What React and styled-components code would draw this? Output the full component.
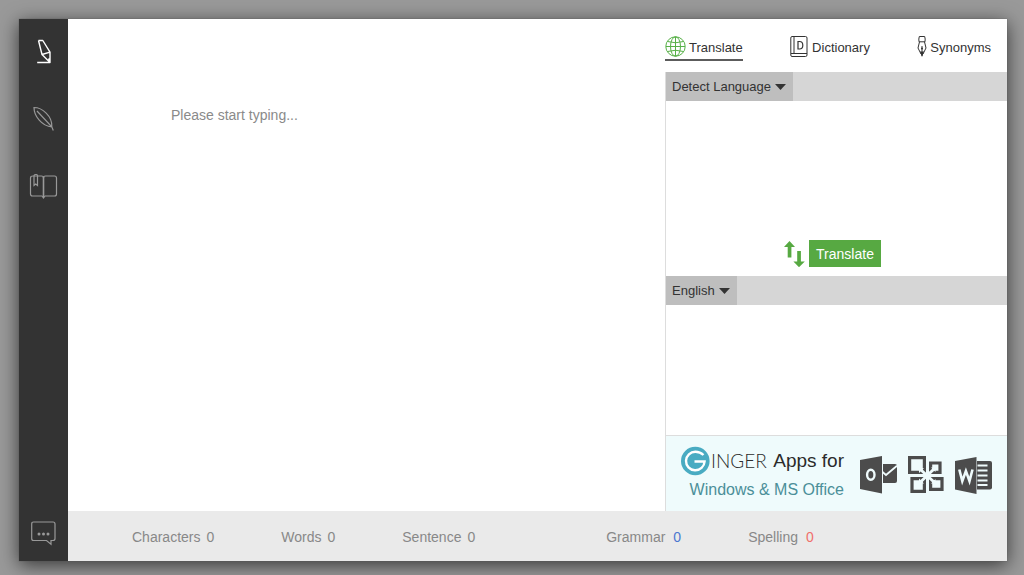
import styled, { createGlobalStyle } from 'styled-components';

const GlobalStyle = createGlobalStyle`
  * {
    box-sizing: border-box;
  }

  body {
    margin: 0;
    background: #999;
    font-family: 'Liberation Sans', Arial, Helvetica, sans-serif;
    color: #333;
  }

  button,
  select,
  textarea {
    margin: 0;
    border: 0;
    background: none;
    font: inherit;
    color: inherit;
  }
`;

const Backdrop = styled.div`
  display: flex;
  min-height: 100vh;
  padding: 19px 17px 14px 19px;
`;

const Window = styled.div`
  flex: 1;
  display: flex;
  background: #fff;
  box-shadow: 0 0 1px #555, 0 4px 18px rgba(0, 0, 0, 0.65);
`;

const Sidebar = styled.nav`
  width: 49px;
  display: flex;
  flex-direction: column;
  align-items: center;
  gap: 40px;
  padding: 18px 0 14px;
  background: #333;
`;

const SideButton = styled.button`
  display: flex;
  padding: 0;
  color: ${(props) => (props.$active ? '#fff' : '#999')};
  ${(props) => props.$last && 'margin-top: auto;'}
  cursor: pointer;
`;

const Main = styled.div`
  flex: 1;
  min-width: 0;
  display: flex;
  flex-direction: column;
`;

const Workspace = styled.div`
  flex: 1;
  display: flex;
`;

const Editor = styled.textarea`
  flex: 1;
  min-width: 0;
  padding: 86px 60px 40px 103px;
  font-size: 14px;
  line-height: 20px;
  resize: none;
  outline: none;

  &::placeholder {
    color: #8a8a8a;
    opacity: 1;
  }
`;

const Panel = styled.section`
  width: 342px;
  display: flex;
  flex-direction: column;
`;

const Tabs = styled.div`
  display: flex;
  justify-content: space-between;
  padding: 17px 16px 11px 0;
`;

const Tab = styled.button`
  display: flex;
  align-items: flex-start;
  gap: ${(props) => props.$gap}px;
  padding: 0;
  border-bottom: 2px solid ${(props) => (props.$active ? '#5c5c5c' : 'transparent')};
  font-size: 13px;
  line-height: 23px;
  cursor: pointer;
`;

const Pane = styled.div`
  flex: ${(props) => props.$grow} 1 0;
  display: flex;
  flex-direction: column;
  border-left: 1px solid #ddd;
`;

const LanguageBar = styled.div`
  display: flex;
  height: 29px;
  background: #d6d6d6;
`;

const Picker = styled.label`
  display: flex;
  align-items: center;
  position: relative;
  background: #bebebe;
`;

const Select = styled.select`
  appearance: none;
  field-sizing: content;
  height: 100%;
  padding: 0 22px 0 6px;
  font-size: 13px;
  outline: none;
`;

const Caret = styled.svg`
  position: absolute;
  right: 7px;
  pointer-events: none;
`;

const TextArea = styled.textarea`
  flex: 1;
  min-height: 40px;
  padding: 8px;
  font-size: 14px;
  resize: none;
  outline: none;
`;

const Actions = styled.div`
  display: flex;
  justify-content: center;
  gap: 4px;
  padding: 0 8px 9px 0;
`;

const SwapButton = styled.button`
  display: flex;
  padding: 0;
  cursor: pointer;
`;

const TranslateButton = styled.button`
  height: 27px;
  padding: 0 7px;
  background: #57a942;
  color: #fff;
  font-size: 14px;
  cursor: pointer;
`;

const Banner = styled.a`
  display: flex;
  align-items: center;
  gap: 15px;
  height: 76px;
  padding: 3px 14px 0 15px;
  border: 1px solid #ddd;
  border-width: 1px 0 0 1px;
  background: #effbfc;
  color: #2b2b2b;
  text-decoration: none;
`;

const BannerText = styled.div`
  flex: 1;
  display: flex;
  flex-direction: column;
`;

const BrandLine = styled.div`
  display: flex;
  align-items: center;
  justify-content: space-between;
  font-size: 19px;
  line-height: 30px;
  white-space: nowrap;
`;

const Brand = styled.span`
  display: flex;
  align-items: center;
  gap: 1px;
  font-family: Lato, sans-serif;
  font-weight: 300;
`;

const Platforms = styled.div`
  color: #4b8f99;
  font-size: 16px;
  line-height: 28px;
  text-align: right;
  white-space: nowrap;
`;

const AppIcons = styled.div`
  display: flex;
  gap: 10px;
`;

const StatusBar = styled.footer`
  display: flex;
  align-items: center;
  gap: 131px;
  height: 50px;
  padding: 1px 0 0 64px;
  background: #eaeaea;
  color: #888;
  font-size: 14px;
`;

const StatGroup = styled.div`
  display: flex;
  gap: 67px;
`;

const Stat = styled.div`
  display: flex;
  gap: ${(props) => props.$gap}px;
`;

const Count = styled.span`
  color: ${(props) => props.$color || 'inherit'};
`;

const PenIcon = () => (
  <svg width="29" height="28" fill="none" stroke="currentColor" strokeWidth="1.4" strokeLinejoin="round">
    <path d="M9.5 3.5H13.8L21 15.2V25.5H8.2M9.5 3.5L13 17.5L21 15.2M13 17.5L21 25.5M19.6 21.5L21 25.5" />
  </svg>
);

const LeafIcon = () => (
  <svg width="29" height="28" fill="none" stroke="currentColor" strokeWidth="1.2">
    <path d="M5 2.5C13 2.5 23.5 11 22.8 21.8C13 21.5 5 11 5 2.5ZM8 6L22.8 21.8L24.3 25.5" />
  </svg>
);

const BookIcon = () => (
  <svg width="29" height="28" fill="none" stroke="currentColor" strokeWidth="1.2">
    <path d="M4 3H12.5Q14.5 3 14.5 5Q14.5 3 16.5 3H25.5Q27.5 3 27.5 5V21Q27.5 23 25.5 23H16L14.5 25L13 23H3.5Q1.5 23 1.5 21V5Q1.5 3 4 3Z" />
    <path d="M14.5 4V24" strokeWidth="1.6" />
    <path d="M5 12.5V3Q5 1.5 6.5 1.5H7.5Q8.5 1.5 8.5 3V12.5L6.7 11Z" />
  </svg>
);

const ChatIcon = () => (
  <svg width="29" height="28" fill="none" stroke="currentColor" strokeWidth="1.2">
    <path d="M4.5 3H24Q26 3 26 5V19.5Q26 21.5 24 21.5H22V25.3L17.5 21.5H4.5Q2.7 21.5 2.7 19.5V5Q2.7 3 4.5 3Z" />
    <g fill="currentColor" stroke="none">
      <circle cx="10" cy="15" r="1.5" />
      <circle cx="14.5" cy="15" r="1.5" />
      <circle cx="19" cy="15" r="1.5" />
    </g>
  </svg>
);

const GlobeIcon = () => (
  <svg width="21" height="21" fill="none" stroke="#57b047">
    <circle cx="10.5" cy="10.5" r="9.7" />
    <ellipse cx="10.5" cy="10.5" rx="5" ry="9.7" />
    <path d="M10.5 1V20M1 10.5H20M2.5 5.5Q10.5 8 18.5 5.5M2.5 15.5Q10.5 13 18.5 15.5" />
  </svg>
);

const DictionaryIcon = () => (
  <svg width="18" height="21" fill="none" stroke="#333">
    <path d="M2 .5H15.5Q17 .5 17 2V19Q17 20.5 15.5 20.5H2Q.8 20.5 .8 19V2Q.8 .5 2 .5ZM1 17.5H17M4 .5V17.5" />
    <path d="M8 5.5V13H9.5Q12.8 13 12.8 9.2Q12.8 5.5 9.5 5.5Z" strokeWidth="1.2" />
  </svg>
);

const NibIcon = () => (
  <svg width="10" height="21" fill="none" stroke="#333">
    <path d="M2.3 .5H7.7Q8.5 3 8 5.8H2Q1.5 3 2.3 .5ZM2.5 5.8L1 12L4 18H6L9 12L7.5 5.8M5 10V20" />
    <circle cx="5" cy="12.5" r="1" fill="#333" stroke="none" />
    <path d="M3 15.5L5 21L7 15.5Z" fill="#333" stroke="none" />
  </svg>
);

const SwapIcon = () => (
  <svg width="21" height="27" fill="#57a942">
    <path d="M5.5 1L11 7H7.4V17.5H3.7V7H0Z" />
    <path d="M13.2 11H16.9V21.5H20.8L15 27.2L9.4 21.5H13.2Z" />
  </svg>
);

const GingerLogo = () => (
  <svg width="29" height="30">
    <circle cx="14.3" cy="15" r="14.3" fill="#49abc2" />
    <path
      d="M22.5 9Q19 5.7 14.5 5.7A9.3 9.3 0 1 0 23.6 15.5H13.5"
      fill="none"
      stroke="#fff"
      strokeWidth="2.4"
    />
  </svg>
);

const OutlookIcon = () => (
  <svg width="38" height="39">
    <path d="M1 4L23 0V37.5L1 33Z" fill="#4c4c4c" />
    <path d="M24 8H36Q38 8 38 10V25Q38 27 36 27H24Z" fill="#4c4c4c" />
    <path d="M23.5 16L27 19L38 9.8" fill="none" stroke="#effbfc" strokeWidth="1.8" />
    <ellipse cx="11.8" cy="18.8" rx="3.7" ry="5" fill="none" stroke="#effbfc" strokeWidth="2.4" />
  </svg>
);

const OfficeIcon = () => (
  <svg width="38" height="39" fill="none" stroke="#4c4c4c" strokeWidth="3.2">
    <path d="M2.6 1.6H17.4V16.4H2.6ZM23.6 7H33V16.4H23.6ZM5 22.6H17.4V35.4H5ZM23.6 22.6H35V33.4H23.6Z" />
    <g stroke="#effbfc" strokeWidth="3">
      <path d="M13.5 13.5L27 26M27 13L13.5 26" />
    </g>
    <g fill="#effbfc" stroke="none">
      <path d="M12 12H17L12 17ZM28.5 11.5H24L28.5 16ZM12 27.5V22.5L17 27.5ZM28.5 27.5H24L28.5 23Z" />
    </g>
  </svg>
);

const WordIcon = () => (
  <svg width="38" height="39">
    <path d="M0 5L21.5 1V38L0 33.5Z" fill="#4c4c4c" />
    <path d="M22 5H35Q37 5 37 7V31.5Q37 33.5 35 33.5H22Z" fill="#4c4c4c" />
    <path d="M22.5 9.5H32.5M22.5 14.5H32.5M22.5 19.5H32.5M22.5 24.5H32.5M22.5 29H32.5" stroke="#effbfc" strokeWidth="1.8" />
    <path d="M4.3 13.5L7.3 25L10.9 15L14.5 25L17.5 13.5" fill="none" stroke="#effbfc" strokeWidth="2.6" />
  </svg>
);

const LanguagePicker = ({ label, initial }) => (
  <LanguageBar>
    <Picker>
      <Select aria-label={label} defaultValue={initial}>
        <option>{initial}</option>
      </Select>
      <Caret width="11" height="6" fill="#333">
        <path d="M0 0H11L5.5 6Z" />
      </Caret>
    </Picker>
  </LanguageBar>
);

const counts = [{ name: 'Characters' }, { name: 'Words' }, { name: 'Sentence' }];

const mistakes = [
  { name: 'Grammar', color: '#4a78d0' },
  { name: 'Spelling', color: '#f0706a' },
];

const Stats = ({ items, gap }) => (
  <StatGroup>
    {items.map((item) => (
      <Stat key={item.name} $gap={gap}>
        <span>{item.name}</span>
        <Count $color={item.color}>0</Count>
      </Stat>
    ))}
  </StatGroup>
);

const App = () => {
  return (
    <>
      <GlobalStyle />
      <Backdrop>
        <Window>
          <Sidebar>
            <SideButton $active aria-label="Write">
              <PenIcon />
            </SideButton>
            <SideButton aria-label="Rephrase">
              <LeafIcon />
            </SideButton>
            <SideButton aria-label="Personal dictionary">
              <BookIcon />
            </SideButton>
            <SideButton $last aria-label="Feedback">
              <ChatIcon />
            </SideButton>
          </Sidebar>
          <Main>
            <Workspace>
              <Editor aria-label="Editor" placeholder="Please start typing..." />
              <Panel>
                <Tabs>
                  <Tab $active $gap={3}>
                    <GlobeIcon />
                    Translate
                  </Tab>
                  <Tab $gap={4}>
                    <DictionaryIcon />
                    Dictionary
                  </Tab>
                  <Tab $gap={3}>
                    <NibIcon />
                    Synonyms
                  </Tab>
                </Tabs>
                <Pane $grow={204}>
                  <LanguagePicker label="Source language" initial="Detect Language" />
                  <TextArea aria-label="Source text" />
                  <Actions>
                    <SwapButton aria-label="Swap languages">
                      <SwapIcon />
                    </SwapButton>
                    <TranslateButton>Translate</TranslateButton>
                  </Actions>
                </Pane>
                <Pane $grow={159}>
                  <LanguagePicker label="Target language" initial="English" />
                  <TextArea aria-label="Translated text" readOnly />
                </Pane>
                <Banner href="#apps">
                  <BannerText>
                    <BrandLine>
                      <Brand>
                        <GingerLogo />
                        INGER
                      </Brand>
                      <span>Apps for</span>
                    </BrandLine>
                    <Platforms>Windows &amp; MS Office</Platforms>
                  </BannerText>
                  <AppIcons>
                    <OutlookIcon />
                    <OfficeIcon />
                    <WordIcon />
                  </AppIcons>
                </Banner>
              </Panel>
            </Workspace>
            <StatusBar>
              <Stats items={counts} gap={6} />
              <Stats items={mistakes} gap={8} />
            </StatusBar>
          </Main>
        </Window>
      </Backdrop>
    </>
  );
};

export default App;
